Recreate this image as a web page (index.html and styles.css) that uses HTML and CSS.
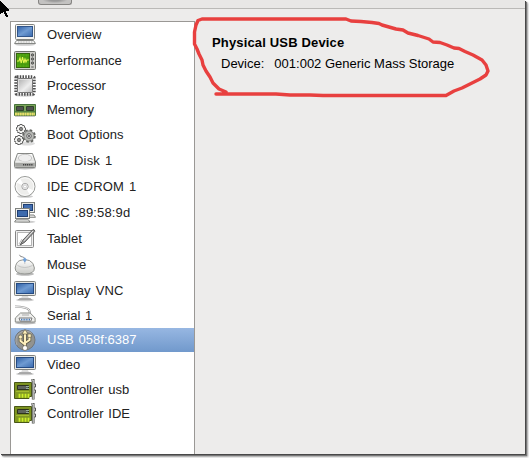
FILE: index.html
```
<!DOCTYPE html>
<html lang="en">
<head>
<meta charset="utf-8">
<title>Virtual machine details</title>
<link rel="stylesheet" href="styles.css">
</head>
<body>
<svg class="defs" aria-hidden="true">
  <defs>
    <linearGradient id="blue" x1="0" y1="0" x2="1" y2="1"><stop offset="0" stop-color="#2f5fa5"/><stop offset=".5" stop-color="#6f9bd2"/><stop offset="1" stop-color="#3869ae"/></linearGradient>
    <linearGradient id="metal" x1="0" y1="0" x2="1" y2="1"><stop offset="0" stop-color="#aaa"/><stop offset=".6" stop-color="#eee"/><stop offset="1" stop-color="#bbb"/></linearGradient>
    <linearGradient id="pale" x1="0" y1="0" x2="0" y2="1"><stop offset="0" stop-color="#fff"/><stop offset="1" stop-color="#c9cac6"/></linearGradient>
    <symbol id="monitor" viewBox="0 0 22 22">
      <ellipse cx="11" cy="20" rx="9" ry="1.3" fill="#ccc"/>
      <path d="M8 16h6l1 2.5H7z" fill="#ddd"/><path d="M5.5 18.5h11l1 1h-13z" fill="#eee" stroke="#999" stroke-width=".8"/>
      <rect x=".5" y="1.5" width="21" height="14" rx="1" fill="#e4e5e2" stroke="#80827f"/>
      <rect x="2.5" y="3.5" width="17" height="10" fill="url(#blue)" stroke="#254b83"/>
    </symbol>
    <symbol id="computer" viewBox="0 0 22 22">
      <ellipse cx="11" cy="20.6" rx="10.5" ry="1.2" fill="#ccc"/>
      <rect x="1.5" y=".5" width="19" height="15" rx="1" fill="#f2f2f0" stroke="#80827f"/>
      <rect x="3.5" y="2.5" width="15" height="10" fill="url(#blue)" stroke="#31558a"/>
      <path d="M2.5 16.5h17l2 3H.5z" fill="#f7f7f5" stroke="#858784"/><path d="M4 18h12M17 18h2" stroke="#aaa" stroke-dasharray="1 .6"/>
    </symbol>
    <symbol id="perf" viewBox="0 0 22 22">
      <rect x=".5" y="1.5" width="21" height="18" rx="1" fill="#cfcfca" stroke="#70726d"/>
      <rect x="2.5" y="3.5" width="13" height="14" fill="#52a812" stroke="#34650c"/>
      <path d="M5 4v13.5M8 4v13.5M11 4v13.5M14 4v13.5M3 7h12M3 10.5h12M3 14h12" stroke="#397d0c" stroke-width=".4"/>
      <path d="M3 11h2l1-3 1.3 5 1.2-6 1.3 6 1.2-4 1 3 1-2h2" fill="none" stroke="#e5f550" stroke-width="1.1"/>
      <g fill="#8b8d88" stroke="#444" stroke-width=".8"><circle cx="18.5" cy="5" r="1.2"/><circle cx="18.5" cy="9" r="1.2"/><circle cx="18.5" cy="13" r="1.2"/></g><path d="M17.2 17h2.5" stroke="#555"/>
    </symbol>
    <symbol id="cpu" viewBox="0 0 22 22">
      <ellipse cx="11" cy="20.5" rx="10" ry="1.5" fill="#ddd"/>
      <rect x="2" y="2" width="18" height="17" rx="1" fill="#fff" stroke="#505050" stroke-width="3.4" stroke-dasharray="1.5 1.25"/>
      <rect x="3.5" y="3.5" width="15" height="14" rx="1" fill="url(#metal)" stroke="#777"/>
      <path d="M4.5 17V4.5h13" fill="none" stroke="#eee" stroke-width=".7"/>
    </symbol>
    <symbol id="ram" viewBox="0 0 22 22">
      <path d="M.5 5.5h21v11H.5z" fill="#7ba35a" stroke="#47743a"/>
      <path d="M2.5 7.5h7v4h-7zM12.5 7.5h7v4h-7z" fill="#505050" stroke="#2e4429"/>
      <path d="M1 15h20" stroke="#e8df68" stroke-width="3" stroke-dasharray="1.9 .5"/><path d="M1 12.8h20" stroke="#35672b" stroke-width=".8"/>
      <path d="M1 17.4h20" stroke="#aaa" stroke-width=".7"/>
    </symbol>
    <symbol id="gears" viewBox="0 0 22 22">
      <ellipse cx="13" cy="19.5" rx="8" ry="2" fill="#ddd"/>
      <g fill="#f1f1ef" stroke="#4b4b4b">
        <path d="M3.5 1.5h2v-1h3v1h2v2h1v3h-1v2h-2v1h-3v-1h-2v-2h-1v-3h1z" stroke-width=".9" stroke-dasharray="2.5 .6"/><circle cx="7" cy="5" r="1.3" stroke-width="1.2"/>
        <path d="M1.5 12.5h2v-1h3v1h2v2h1v3h-1v2h-2v1h-3v-1h-2v-2h-1v-3h1z" stroke-width=".9" stroke-dasharray="2.5 .6"/><circle cx="5" cy="16" r="1.3" stroke-width="1.2"/>
        <circle cx="15" cy="12" r="5.8" fill="#b9bbb7" stroke="#626460" stroke-width="2" stroke-dasharray="2.5 2.05"/><circle cx="15" cy="12" r="5" fill="#b9bbb7" stroke="#777" stroke-width=".7"/><circle cx="15" cy="12" r="2.3" fill="#eee" stroke-width=".8"/><circle cx="15" cy="12" r=".8"/>
      </g>
    </symbol>
    <symbol id="disk" viewBox="0 0 22 22">
      <ellipse cx="11" cy="18" rx="11" ry="1.5" fill="#bbb"/>
      <path d="M3.5 3.5h15l3 8.5v4.5q0 1-1 1h-19q-1 0-1-1V12z" fill="url(#pale)" stroke="#858784"/>
      <ellipse cx="11" cy="8" rx="6.7" ry="3.7" fill="#eee" stroke="#bbb" stroke-width=".8"/>
      <path d="M1.2 12.6h19.6v4H1.2z" fill="#a4a5a2"/><path d="M9 14.7h10" stroke="#444" stroke-width="1.5" stroke-dasharray="1.2 .7"/><path d="M1.5 12h19" stroke="#fff" stroke-width=".8"/>
    </symbol>
    <symbol id="cd" viewBox="0 0 22 22">
      <ellipse cx="11" cy="20.5" rx="8" ry="1.3" fill="#ccc"/><circle cx="11" cy="10.5" r="10" fill="#ededeb" stroke="#8c8e8b" stroke-width=".9"/>
      <path d="M11 10.5L2.5 6.5 6 2.7zM11 10.5l8.5 4-3.8 4z" fill="#fff"/><circle cx="11" cy="10.5" r="8.8" fill="none" stroke="#fff" stroke-width=".8"/>
      <circle cx="11" cy="10.5" r="3.2" fill="#eee" stroke="#999" stroke-width=".8"/><circle cx="11" cy="10.5" r="1.5" fill="#fff" stroke="#aaa" stroke-width=".5"/>
    </symbol>
    <symbol id="nic" viewBox="0 0 22 22">
      <ellipse cx="12" cy="19.8" rx="9.5" ry="1.2" fill="#ccc"/>
      <g stroke="#80827f"><rect x="7.5" y=".5" width="13" height="10" fill="#e7e8e5"/><path d="M12 13h8l1.5 2.3H11z" fill="#eee"/></g><rect x="9.5" y="2.5" width="9" height="6" fill="#416daf" stroke="#203f73"/>
      <g stroke="#80827f"><rect x="1.5" y="6.5" width="14" height="10" fill="#f0f0ee"/><path d="M2 17.8h12.5l1.3 2.2H.6z" fill="#f4f4f2"/></g><rect x="3.5" y="8.5" width="10" height="6" fill="#3e6bad" stroke="#203f73"/>
    </symbol>
    <symbol id="tablet" viewBox="0 0 22 22">
      <rect x="1.5" y="2.5" width="18" height="17" rx="1" fill="#eee" stroke="#858585"/><rect x="3.5" y="4.5" width="14" height="13" fill="#fff" stroke="#b5b5b5"/>
      <path d="M5 16l3-5M7 16.5l3-2" stroke="#bbb"/><path d="M6 17l3-5L19 1.5q2 .2 1.7 2L11 14z" fill="#999" stroke="#555" stroke-width=".9"/><path d="M10 12.8l9-9.8" stroke="#eee"/>
    </symbol>
    <symbol id="mouse" viewBox="0 0 22 22">
      <ellipse cx="11" cy="20" rx="9" ry="1.8" fill="#bbb"/><path d="M5.5.8q.5 2.2 3 2.1Q11 3 10.7 8" fill="none" stroke="#888"/>
      <path d="M1.2 14q.8-6 4.7-7.5 5-2 9.5 0 4.5 2 5 7.5.2 6-9.6 6t-9.6-6z" fill="url(#pale)" stroke="#929490"/>
      <path d="M3.5 11.5q7 4 15 0M10.8 6.5V10" fill="none" stroke="#bbb" stroke-width=".8"/><path d="M10.8 3.3l2 2.5-2 2.8-2-2.8z" fill="#70a0d8"/>
    </symbol>
    <symbol id="serial" viewBox="0 0 22 22">
      <ellipse cx="11.5" cy="18" rx="10.5" ry="1.5" fill="#bbb"/><path d="M1 1.5q5 .1 10 1.2 6 1.7 4.5 6" fill="none" stroke="#999" stroke-width="2.2"/><path d="M1 1.5q5 .1 10 1.2 6 1.7 4.5 6" fill="none" stroke="#eee"/>
      <path d="M6.5 8h9.7l4.9 5v4H1.3v-4z" fill="#eeeeec" stroke="#888a85"/><path d="M5 13h13l-1.2 3.2H6.2z" fill="#f9f9f9" stroke="#777"/><path d="M7 14.6h9.5" stroke="#477bb9" stroke-width="1.7" stroke-dasharray="1 .6"/><path d="M8 10h7" stroke="#aaa"/>
    </symbol>
    <symbol id="usb" viewBox="0 0 22 22">
      <circle cx="11" cy="11" r="10" fill="#92938f" stroke="#71767b"/><path d="M3 16A9.6 9.6 0 0 1 18 4.5" fill="none" stroke="#aaa"/>
      <g fill="none" stroke="#5a5540" stroke-width="3.4"><path d="M11 3v15M6.5 9v3l4.5 3.5M15.5 7v4L11 14"/></g>
      <g fill="none" stroke="#fff1bd" stroke-width="2"><path d="M11 3v15M6.5 9v3l4.5 3.5M15.5 7v4L11 14"/></g>
      <g fill="#fff1bd" stroke="#5a5540" stroke-width=".6"><path d="M11 .5L14 5H8z"/><circle cx="6.5" cy="8" r="1.9"/><path d="M13.8 5h3.4v3.4h-3.4z"/><circle cx="11" cy="19" r="2.5" fill="#fff"/></g>
    </symbol>
    <symbol id="card" viewBox="0 0 22 22">
      <path d="M.5 3.5h17v14H15v2H.5z" fill="#829923" stroke="#485717"/><path d="M1.5 4.5h15v7h-15z" fill="#7b9020"/>
      <path d="M3.5 6.5h11v4h-11z" fill="#5e635b" stroke="#2d321d"/><path d="M12 7.5h3M12 9.5h3" stroke="#96ad9d"/>
      <path d="M5.5 18.8v-4M8.5 18.8v-4M11.5 18.8v-4M14.5 18.8v-4" stroke="#ccee28" stroke-width="1.8"/><path d="M2 12.5h13" stroke="#a4ba30"/>
      <path d="M17 1h2.2v19.5" fill="none" stroke="#555753" stroke-width="2.7"/><path d="M17 1h2.2v19" fill="none" stroke="#ddd"/><path d="M20.2 5h1.3v3h-1.3M20.2 11h1.3v3h-1.3" fill="#ccc" stroke="#555"/>
    </symbol>
  </defs>
</svg>
<div class="window">
  <header class="toolbar"><div class="tool-button"></div></header>
  <main class="content">
    <ul class="hardware">
      <li class="row tall"><svg class="icon"><use href="#computer"/></svg>Overview</li>
      <li class="row"><svg class="icon"><use href="#perf"/></svg>Performance</li>
      <li class="row"><svg class="icon"><use href="#cpu"/></svg>Processor</li>
      <li class="row short"><svg class="icon"><use href="#ram"/></svg>Memory</li>
      <li class="row tall"><svg class="icon"><use href="#gears"/></svg>Boot Options</li>
      <li class="row tall wide"><svg class="icon"><use href="#disk"/></svg>IDE Disk 1</li>
      <li class="row tall wide"><svg class="icon"><use href="#cd"/></svg>IDE CDROM 1</li>
      <li class="row tall wide"><svg class="icon"><use href="#nic"/></svg>NIC :89:58:9d</li>
      <li class="row tall"><svg class="icon"><use href="#tablet"/></svg>Tablet</li>
      <li class="row tall"><svg class="icon"><use href="#mouse"/></svg>Mouse</li>
      <li class="row wide"><svg class="icon"><use href="#monitor"/></svg>Display VNC</li>
      <li class="row"><svg class="icon"><use href="#serial"/></svg>Serial 1</li>
      <li class="row short selected"><svg class="icon"><use href="#usb"/></svg>USB 058f:6387</li>
      <li class="row"><svg class="icon"><use href="#monitor"/></svg>Video</li>
      <li class="row"><svg class="icon"><use href="#card"/></svg>Controller usb</li>
      <li class="row short"><svg class="icon"><use href="#card"/></svg>Controller IDE</li>
    </ul>
    <section class="details">
      <h1>Physical USB Device</h1>
      <div class="property"><span>Device:</span><span>001:002 Generic Mass Storage</span></div>
    </section>
  </main>
</div>
<svg class="annotation" viewBox="0 0 529 110">
  <path d="M218 19H346L351 21 361 21.5 372 22.5 379 23.5 382 25 389 27 396 29 403 30 408 33 418 35.5 429 39 433 42 440 42.5 447 45 454 48 459 48.5 465 51.5 473 55 482 60 486 65 488 71 486 75 480 79 470 84 462 88 454 91 446 95.5H323L310 95 290 95 276 94 216 94M226 92L219 89 213 83 210 77 206 71 203 65 202 60 199 54 197 49 194.5 44V32L196 25 198 20.5 202 19H218" />
</svg>
<svg class="pointer" viewBox="0 0 10 17"><path d="M0 1h1v1h1v1h1v1h1v1h1v1h1v1h1v1h1v1h1v2H6v2h1v2h1v2H6v-1H5v-2H4v-2H3v1H1v1H0z"/></svg>
</body>
</html>
```

FILE: styles.css
```
* { box-sizing: border-box; }
body {
  margin: 0;
  width: 529px;
  height: 458px;
  overflow: hidden;
  background: #fff;
  font: 13px/16px "Liberation Sans", Arial, sans-serif;
  color: #222;
}
.defs { position: absolute; width: 0; height: 0; }
.window {
  display: flex;
  flex-direction: column;
  width: 525px;
  height: 454px;
  background: #edeceb;
  box-shadow: 1px 1px 0 #484848, 2px 2px 1px #777, 3px 3px 2px #aaa;
}
.toolbar {
  flex: none;
  height: 9px;
  padding-left: 38px;
  background: #e8e7e6;
  border-bottom: 1px solid #bab9b7;
}
.tool-button {
  width: 34px;
  height: 5px;
  border: 1px solid #858482;
  border-top: 0;
  border-radius: 0 0 3px 3px;
  background: radial-gradient(ellipse at 50% 0, #999 0 20%, #c3c2c1 55%);
}
.content { display: flex; flex: 1; padding: 12px 0 0 10px; }
.hardware {
  width: 185px;
  margin: 0;
  padding: 0;
  list-style: none;
  background: #fff;
  border: 1px solid #9a9895;
  border-bottom: 0;
}
.row { display: flex; align-items: center; gap: 11px; height: 25px; padding-left: 3px; white-space: pre; word-spacing: 1px; letter-spacing: .03px; }
.tall { height: 26px; }
.short { height: 24px; }
.wide { word-spacing: 1.2px; letter-spacing: .15px; }
.selected { color: #fff; background: linear-gradient(#97b7e2, #7199cc); }
.icon { width: 22px; height: 22px; flex: none; }
.short .icon { margin-top: 0; }
.details { padding: 14px 0 0 17px; color: #000; }
.details h1 { margin: 0; font-size: 13px; line-height: 16px; letter-spacing: .16px; }
.property { display: flex; gap: 10px; margin: 5px 0 0 9px; white-space: nowrap; }
.annotation { position: absolute; left: 0; top: 0; width: 529px; height: 110px; }
.annotation path { fill: none; stroke: #e8403f; stroke-width: 3.4; stroke-linejoin: round; stroke-linecap: round; }
.pointer { position: absolute; left: 0; top: 0; width: 10px; height: 17px; }
```
